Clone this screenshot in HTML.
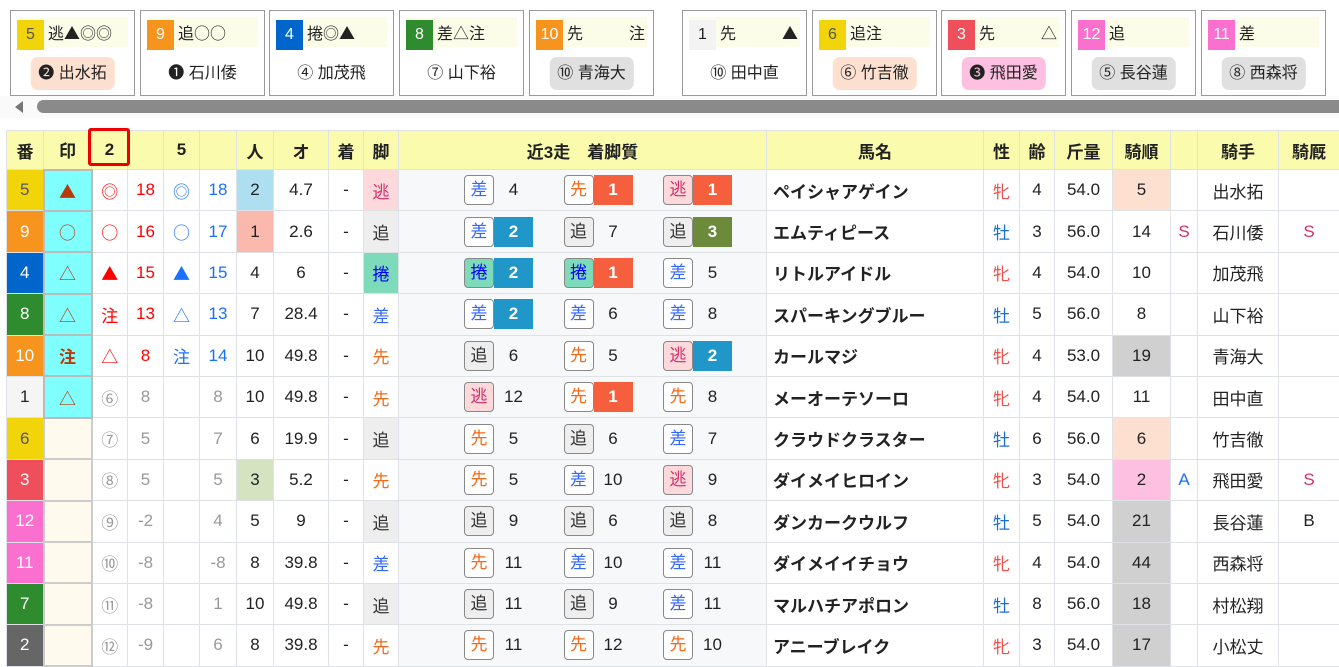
<!DOCTYPE html>
<html><head><meta charset="utf-8"><style>
*{box-sizing:border-box;margin:0;padding:0}
body{width:1339px;height:667px;overflow:hidden;background:#fff;font-family:"Liberation Sans","Noto Sans CJK JP",sans-serif;color:#222;position:relative}
.mk{font-family:"Noto Sans CJK JP",sans-serif}
.card{position:absolute;top:10px;width:125px;height:86px;border:1px solid #999;background:#fff}
.card .t{position:absolute;left:6px;top:6px;width:111px;height:30px;background:#fbfde9;font-size:16px;line-height:30px}
.card .t .w{display:inline-block;width:27px;height:30px;text-align:center;margin-right:4px;font-family:"Liberation Sans",sans-serif}
.card .t .r{position:absolute;right:2px;top:0}
.card .p{position:absolute;left:50%;transform:translateX(-50%);top:46px;height:33px;line-height:33px;padding:0 8px;border-radius:7px;font-size:16px;white-space:nowrap}
.sb{position:absolute;left:0;top:96px;width:1339px;height:22px;background:#fafafa}
.sb .a{position:absolute;left:15px;top:5px;width:0;height:0;border-top:6px solid transparent;border-bottom:6px solid transparent;border-right:8px solid #777}
.sb .th{position:absolute;left:37px;top:4px;width:1310px;height:13px;border-radius:7px;background:#8a8a8a}
table{position:absolute;left:6px;top:130px;width:1393px;border-collapse:collapse;table-layout:fixed;font-size:17px}
td,th{border:1px solid #dee2e6;height:41.4px;text-align:center;padding:0;white-space:nowrap}
th{background:#fbfbae;font-weight:bold;height:39px}
.wk{color:#fff}
.m{background:#80ffff;color:#b83a0a;border:2px solid #bbb;font-family:"Noto Sans CJK JP",sans-serif}
.m0{background:#fffaee;border:2px solid #ccc}
.rd{color:#f00}.bl{color:#1a6fff}.gr{color:#999}
.k{background:#f7f8fa;text-align:left}
.k .s{display:inline-block;width:99.5px;height:30px;vertical-align:middle}
.k .s:first-child{margin-left:65px}
.l{display:inline-block;width:30px;height:30px;border:1px solid #888;border-radius:4px;text-align:center;line-height:28px;font-weight:normal;vertical-align:top;font-size:17px}
.n{display:inline-block;width:39px;height:30px;text-align:center;line-height:30px;font-style:normal;vertical-align:top}
.n1{background:#f55f3e;color:#fff;font-weight:bold}.n2{background:#2196c9;color:#fff;font-weight:bold}.n3{background:#6b8a3a;color:#fff;font-weight:bold}
.NI{background:#fdd9dc;color:#d0306a}.OI{background:#eee;color:#333}.MA{background:#7ddbb9;color:#00f}.SA{background:#fff;color:#3366ff}.SE{background:#fff;color:#f06a1a}
.nm{text-align:left;padding-left:6px;font-weight:bold}
.f{color:#f0504a}.mm{color:#1a6fd0}
.pk{background:#fde0d0}.gy{background:#d0d0d0}.pi{background:#fdc0e0}
.hl{position:absolute;left:88px;top:128px;width:42px;height:38px;border:3px solid #e00;border-radius:3px}
</style></head><body>
<div class="card" style="left:10px"><div class="t mk"><span class="w" style="background:#f2d40a;color:#555">5</span>逃▲◎◎</div><div class="p" style="background:#fde0d0">❷ 出水拓</div></div>
<div class="card" style="left:140px"><div class="t mk"><span class="w" style="background:#f7941d;color:#fff">9</span>追○○</div><div class="p">❶ 石川倭</div></div>
<div class="card" style="left:269px"><div class="t mk"><span class="w" style="background:#0066cc;color:#fff">4</span>捲◎▲</div><div class="p">④ 加茂飛</div></div>
<div class="card" style="left:399px"><div class="t mk"><span class="w" style="background:#2e8b2e;color:#fff">8</span>差△注</div><div class="p">⑦ 山下裕</div></div>
<div class="card" style="left:529px"><div class="t mk"><span class="w" style="background:#f7941d;color:#fff">10</span>先<span class="r">注</span></div><div class="p" style="background:#e0e0e0">⑩ 青海大</div></div>
<div class="card" style="left:682px"><div class="t mk"><span class="w" style="background:#f3f3f3">1</span>先<span class="r">▲</span></div><div class="p">⑩ 田中直</div></div>
<div class="card" style="left:812px"><div class="t mk"><span class="w" style="background:#f2d40a;color:#555">6</span>追注</div><div class="p" style="background:#fde0d0">⑥ 竹吉徹</div></div>
<div class="card" style="left:941px"><div class="t mk"><span class="w" style="background:#ef4f5b;color:#fff">3</span>先<span class="r">△</span></div><div class="p" style="background:#fdc0e0">❸ 飛田愛</div></div>
<div class="card" style="left:1071px"><div class="t mk"><span class="w" style="background:#fb6fcf;color:#fff">12</span>追</div><div class="p" style="background:#e0e0e0">⑤ 長谷蓮</div></div>
<div class="card" style="left:1201px"><div class="t mk"><span class="w" style="background:#fb6fcf;color:#fff">11</span>差</div><div class="p" style="background:#e0e0e0">⑧ 西森将</div></div>
<div class="sb"><div class="a"></div><div class="th"></div></div>
<table>
<colgroup><col style="width:37px"><col style="width:48px"><col style="width:36px"><col style="width:36px"><col style="width:36px"><col style="width:37px"><col style="width:37px"><col style="width:55px"><col style="width:35px"><col style="width:35px"><col style="width:368px"><col style="width:217px"><col style="width:36px"><col style="width:35px"><col style="width:58px"><col style="width:58px"><col style="width:27px"><col style="width:81px"><col style="width:61px"><col style="width:60px"></colgroup>
<tr><th>番</th><th>印</th><th>2</th><th></th><th>5</th><th></th><th>人</th><th>オ</th><th>着</th><th>脚</th><th>近3走　着脚質</th><th>馬名</th><th>性</th><th>齢</th><th>斤量</th><th>騎順</th><th></th><th>騎手</th><th>騎厩</th><th></th></tr>
<tr><td class="wk" style="background:#f2d40a;color:#555">5</td><td class="m">▲</td><td class="rd mk">◎</td><td class="rd">18</td><td class="bl mk">◎</td><td class="bl">18</td><td style="background:#addff0">2</td><td>4.7</td><td>-</td><td class="NI">逃</td><td class="k"><span class="s"><b class="l SA">差</b><i class="n">4</i></span><span class="s"><b class="l SE">先</b><i class="n n1">1</i></span><span class="s"><b class="l NI">逃</b><i class="n n1">1</i></span></td><td class="nm">ペイシャアゲイン</td><td class="f">牝</td><td>4</td><td>54.0</td><td class="pk">5</td><td></td><td>出水拓</td><td></td><td></td></tr>
<tr><td class="wk" style="background:#f7941d">9</td><td class="m">○</td><td class="rd mk">○</td><td class="rd">16</td><td class="bl mk">○</td><td class="bl">17</td><td style="background:#fbb9ad">1</td><td>2.6</td><td>-</td><td class="OI">追</td><td class="k"><span class="s"><b class="l SA">差</b><i class="n n2">2</i></span><span class="s"><b class="l OI">追</b><i class="n">7</i></span><span class="s"><b class="l OI">追</b><i class="n n3">3</i></span></td><td class="nm">エムティピース</td><td class="mm">牡</td><td>3</td><td>56.0</td><td>14</td><td style="color:#d0306a">S</td><td>石川倭</td><td style="color:#d0306a">S</td><td></td></tr>
<tr><td class="wk" style="background:#0066cc">4</td><td class="m">△</td><td class="rd mk">▲</td><td class="rd">15</td><td class="bl mk">▲</td><td class="bl">15</td><td>4</td><td>6</td><td>-</td><td class="MA">捲</td><td class="k"><span class="s"><b class="l MA">捲</b><i class="n n2">2</i></span><span class="s"><b class="l MA">捲</b><i class="n n1">1</i></span><span class="s"><b class="l SA">差</b><i class="n">5</i></span></td><td class="nm">リトルアイドル</td><td class="f">牝</td><td>4</td><td>54.0</td><td>10</td><td></td><td>加茂飛</td><td></td><td></td></tr>
<tr><td class="wk" style="background:#2e8b2e">8</td><td class="m">△</td><td class="rd mk">注</td><td class="rd">13</td><td class="bl mk">△</td><td class="bl">13</td><td>7</td><td>28.4</td><td>-</td><td class="SA">差</td><td class="k"><span class="s"><b class="l SA">差</b><i class="n n2">2</i></span><span class="s"><b class="l SA">差</b><i class="n">6</i></span><span class="s"><b class="l SA">差</b><i class="n">8</i></span></td><td class="nm">スパーキングブルー</td><td class="mm">牡</td><td>5</td><td>56.0</td><td>8</td><td></td><td>山下裕</td><td></td><td></td></tr>
<tr><td class="wk" style="background:#f7941d">10</td><td class="m" style="font-weight:bold">注</td><td class="rd mk">△</td><td class="rd">8</td><td class="bl mk">注</td><td class="bl">14</td><td>10</td><td>49.8</td><td>-</td><td class="SE">先</td><td class="k"><span class="s"><b class="l OI">追</b><i class="n">6</i></span><span class="s"><b class="l SE">先</b><i class="n">5</i></span><span class="s"><b class="l NI">逃</b><i class="n n2">2</i></span></td><td class="nm">カールマジ</td><td class="f">牝</td><td>4</td><td>53.0</td><td class="gy">19</td><td></td><td>青海大</td><td></td><td></td></tr>
<tr><td style="background:#f5f5f5">1</td><td class="m">△</td><td class="gr mk">⑥</td><td class="gr">8</td><td></td><td class="gr">8</td><td>10</td><td>49.8</td><td>-</td><td class="SE">先</td><td class="k"><span class="s"><b class="l NI">逃</b><i class="n">12</i></span><span class="s"><b class="l SE">先</b><i class="n n1">1</i></span><span class="s"><b class="l SE">先</b><i class="n">8</i></span></td><td class="nm">メーオーテソーロ</td><td class="f">牝</td><td>4</td><td>54.0</td><td>11</td><td></td><td>田中直</td><td></td><td></td></tr>
<tr><td style="background:#f2d40a;color:#555">6</td><td class="m0"></td><td class="gr mk">⑦</td><td class="gr">5</td><td></td><td class="gr">7</td><td>6</td><td>19.9</td><td>-</td><td class="OI">追</td><td class="k"><span class="s"><b class="l SE">先</b><i class="n">5</i></span><span class="s"><b class="l OI">追</b><i class="n">6</i></span><span class="s"><b class="l SA">差</b><i class="n">7</i></span></td><td class="nm">クラウドクラスター</td><td class="mm">牡</td><td>6</td><td>56.0</td><td class="pk">6</td><td></td><td>竹吉徹</td><td></td><td></td></tr>
<tr><td class="wk" style="background:#ef4f5b">3</td><td class="m0"></td><td class="gr mk">⑧</td><td class="gr">5</td><td></td><td class="gr">5</td><td style="background:#d5e3c0">3</td><td>5.2</td><td>-</td><td class="SE">先</td><td class="k"><span class="s"><b class="l SE">先</b><i class="n">5</i></span><span class="s"><b class="l SA">差</b><i class="n">10</i></span><span class="s"><b class="l NI">逃</b><i class="n">9</i></span></td><td class="nm">ダイメイヒロイン</td><td class="f">牝</td><td>3</td><td>54.0</td><td class="pi">2</td><td style="color:#1a6fff">A</td><td>飛田愛</td><td style="color:#d0306a">S</td><td></td></tr>
<tr><td class="wk" style="background:#fb6fcf">12</td><td class="m0"></td><td class="gr mk">⑨</td><td class="gr">-2</td><td></td><td class="gr">4</td><td>5</td><td>9</td><td>-</td><td class="OI">追</td><td class="k"><span class="s"><b class="l OI">追</b><i class="n">9</i></span><span class="s"><b class="l OI">追</b><i class="n">6</i></span><span class="s"><b class="l OI">追</b><i class="n">8</i></span></td><td class="nm">ダンカークウルフ</td><td class="mm">牡</td><td>5</td><td>54.0</td><td class="gy">21</td><td></td><td>長谷蓮</td><td>B</td><td></td></tr>
<tr><td class="wk" style="background:#fb6fcf">11</td><td class="m0"></td><td class="gr mk">⑩</td><td class="gr">-8</td><td></td><td class="gr">-8</td><td>8</td><td>39.8</td><td>-</td><td class="SA">差</td><td class="k"><span class="s"><b class="l SE">先</b><i class="n">11</i></span><span class="s"><b class="l SA">差</b><i class="n">10</i></span><span class="s"><b class="l SA">差</b><i class="n">11</i></span></td><td class="nm">ダイメイイチョウ</td><td class="f">牝</td><td>4</td><td>54.0</td><td class="gy">44</td><td></td><td>西森将</td><td></td><td></td></tr>
<tr><td class="wk" style="background:#2e8b2e">7</td><td class="m0"></td><td class="gr mk">⑪</td><td class="gr">-8</td><td></td><td class="gr">1</td><td>10</td><td>49.8</td><td>-</td><td class="OI">追</td><td class="k"><span class="s"><b class="l OI">追</b><i class="n">11</i></span><span class="s"><b class="l OI">追</b><i class="n">9</i></span><span class="s"><b class="l SA">差</b><i class="n">11</i></span></td><td class="nm">マルハチアポロン</td><td class="mm">牡</td><td>8</td><td>56.0</td><td class="gy">18</td><td></td><td>村松翔</td><td></td><td></td></tr>
<tr><td class="wk" style="background:#666">2</td><td class="m0"></td><td class="gr mk">⑫</td><td class="gr">-9</td><td></td><td class="gr">6</td><td>8</td><td>39.8</td><td>-</td><td class="SE">先</td><td class="k"><span class="s"><b class="l SE">先</b><i class="n">11</i></span><span class="s"><b class="l SE">先</b><i class="n">12</i></span><span class="s"><b class="l SE">先</b><i class="n">10</i></span></td><td class="nm">アニーブレイク</td><td class="f">牝</td><td>3</td><td>54.0</td><td class="gy">17</td><td></td><td>小松丈</td><td></td><td></td></tr>
</table>
<div class="hl"></div>
</body></html>
